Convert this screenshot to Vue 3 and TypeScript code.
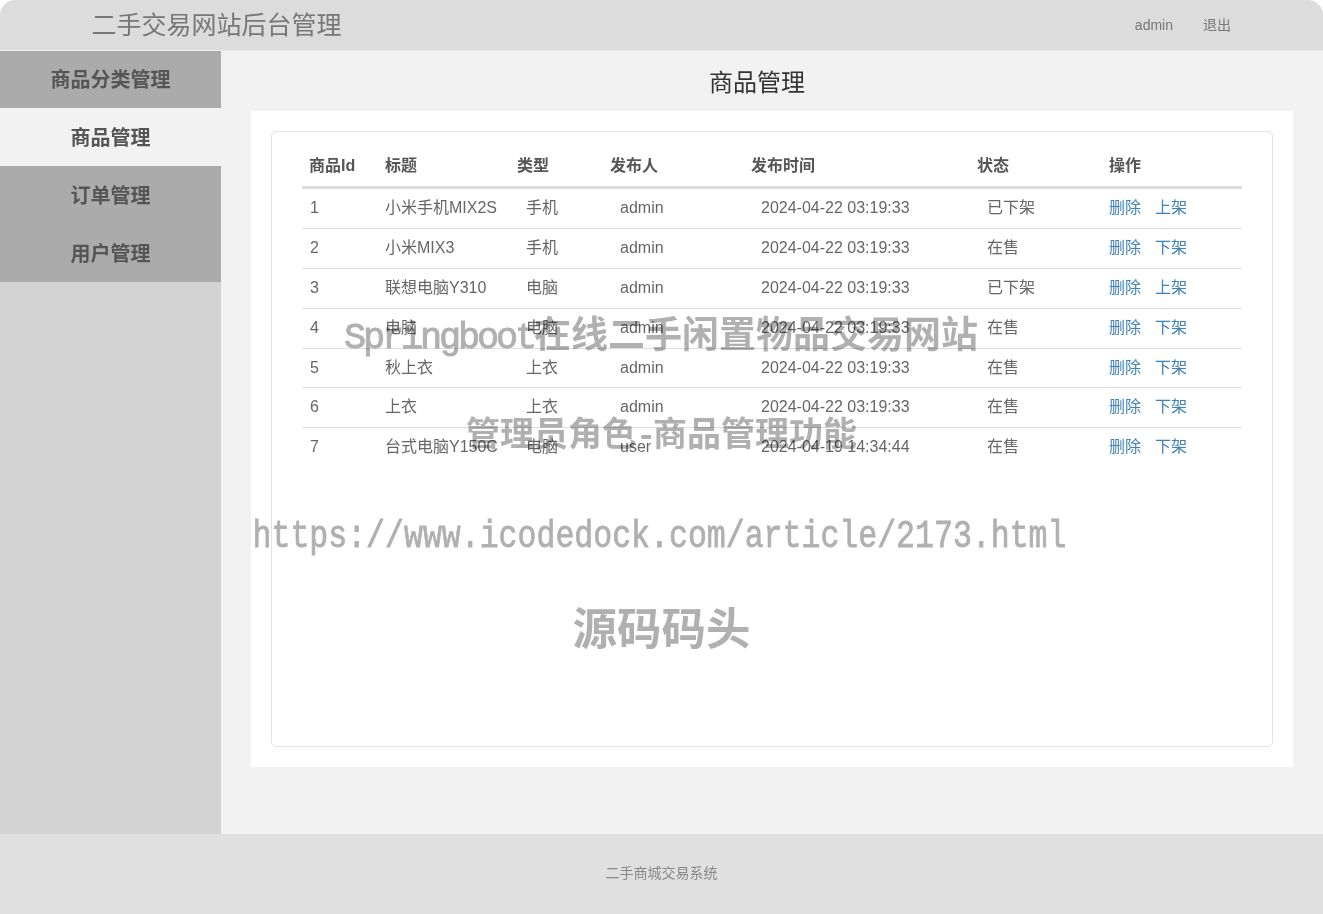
<script setup lang="ts">
interface Goods {
  id: number
  title: string
  type: string
  publisher: string
  time: string
  status: string
  action: string
}

const menus = ['商品分类管理', '商品管理', '订单管理', '用户管理']
const activeMenu = '商品管理'

const goods: Goods[] = [
  { id: 1, title: '小米手机MIX2S', type: '手机', publisher: 'admin', time: '2024-04-22 03:19:33', status: '已下架', action: '上架' },
  { id: 2, title: '小米MIX3', type: '手机', publisher: 'admin', time: '2024-04-22 03:19:33', status: '在售', action: '下架' },
  { id: 3, title: '联想电脑Y310', type: '电脑', publisher: 'admin', time: '2024-04-22 03:19:33', status: '已下架', action: '上架' },
  { id: 4, title: '电脑', type: '电脑', publisher: 'admin', time: '2024-04-22 03:19:33', status: '在售', action: '下架' },
  { id: 5, title: '秋上衣', type: '上衣', publisher: 'admin', time: '2024-04-22 03:19:33', status: '在售', action: '下架' },
  { id: 6, title: '上衣', type: '上衣', publisher: 'admin', time: '2024-04-22 03:19:33', status: '在售', action: '下架' },
  { id: 7, title: '台式电脑Y150C', type: '电脑', publisher: 'user', time: '2024-04-19 14:34:44', status: '在售', action: '下架' },
]
</script>

<template>
  <div class="page">
    <header class="top">
      <h1 class="brand">二手交易网站后台管理</h1>
      <div class="user">
        <span>admin</span>
        <span>退出</span>
      </div>
    </header>

    <div class="middle">
      <aside class="side">
        <a
          v-for="m in menus"
          :key="m"
          class="menu-item"
          :class="{ active: m === activeMenu }"
        >{{ m }}</a>
      </aside>

      <main class="content">
        <h2 class="page-title">商品管理</h2>
        <section class="panel">
          <div class="card">
            <table class="goods">
              <colgroup>
                <col class="c1" />
                <col class="c2" />
                <col class="c3" />
                <col class="c4" />
                <col class="c5" />
                <col class="c6" />
                <col class="c7" />
              </colgroup>
              <thead>
                <tr>
                  <th>商品Id</th>
                  <th>标题</th>
                  <th>类型</th>
                  <th>发布人</th>
                  <th>发布时间</th>
                  <th>状态</th>
                  <th>操作</th>
                </tr>
              </thead>
              <tbody>
                <tr v-for="g in goods" :key="g.id">
                  <td class="id">{{ g.id }}</td>
                  <td>{{ g.title }}</td>
                  <td class="type">{{ g.type }}</td>
                  <td class="indent">{{ g.publisher }}</td>
                  <td class="indent">{{ g.time }}</td>
                  <td class="indent">{{ g.status }}</td>
                  <td>
                    <a class="link">删除</a>
                    <a class="link">{{ g.action }}</a>
                  </td>
                </tr>
              </tbody>
            </table>
          </div>
        </section>
      </main>
    </div>

    <footer class="bottom">二手商城交易系统</footer>

    <!-- watermark sits over the whole page -->
    <div class="watermark">
      <p class="wm wm1"><span class="latin">Springboot</span>在线二手闲置物品交易网站</p>
      <p class="wm wm2">管理员角色<span class="dash">-</span>商品管理功能</p>
      <p class="wm wm3">https://www.icodedock.com/article/2173.html</p>
      <p class="wm wm4">源码码头</p>
    </div>
  </div>
</template>

<style>
html,
body {
  margin: 0;
  background: #fff;
}
</style>

<style scoped>
.page {
  position: relative;
  display: flex;
  flex-direction: column;
  height: 914px;
  overflow: hidden;
  font-family: "Liberation Sans", "Noto Sans CJK SC", sans-serif;
  font-size: 16px;
  line-height: 1.42857;
  color: #666;
}

.top {
  display: flex;
  align-items: center;
  justify-content: space-between;
  flex: none;
  height: 48px;
  padding: 2px 92px 0 91.5px;
  background: #dcdcdc;
  border-bottom: 1px solid #eee;
  border-radius: 15px 15px 0 0;
}

.brand {
  margin: 0;
  font-size: 25px;
  font-weight: 400;
  color: #777;
}

.user {
  display: flex;
  gap: 30px;
  font-size: 14px;
  color: #777;
}

.middle {
  display: flex;
  flex: 1;
  min-height: 0;
}

.side {
  flex: none;
  width: 221px;
  background: #d3d3d3;
}

.menu-item {
  display: block;
  height: 58px;
  line-height: 60px;
  text-align: center;
  font-size: 20px;
  font-weight: 700;
  color: #555;
  background: #ababab;
}

.menu-item:first-child {
  height: 57px;
  line-height: 58px;
}

.menu-item.active {
  background: #f2f2f2;
}

.content {
  flex: 1;
  padding-right: 30px;
  background: #f2f2f2;
}

.page-title {
  margin: 0;
  height: 60px;
  line-height: 64px;
  text-align: center;
  font-size: 24px;
  font-weight: 400;
  color: #333;
}

.panel {
  height: 656px;
  margin-left: 30px;
  padding: 20px;
  box-sizing: border-box;
  background: #fff;
}

.card {
  height: 100%;
  box-sizing: border-box;
  padding: 15.3px 30px 0;
  background: #fff;
  border: 1px solid #e3e3e3;
  border-radius: 5px;
}

.goods {
  width: 940px;
  table-layout: fixed;
  border-collapse: collapse;
  border-spacing: 0;
}

.c1 { width: 76px; }
.c2 { width: 132px; }
.c3 { width: 93px; }
.c4 { width: 141px; }
.c5 { width: 226px; }
.c6 { width: 132px; }
.c7 { width: 140px; }

.goods th {
  padding: 8px 7px;
  text-align: left;
  font-weight: 700;
  color: #555;
  border-bottom: 3px solid #ddd;
}

.goods td {
  padding: 8px 7px;
  white-space: nowrap;
  border-top: 1px solid #ddd;
}

.goods tbody tr:first-child td {
  border-top: 0;
}

.goods td.id {
  padding-left: 8px;
}

.goods td.type {
  padding-left: 16px;
}

.goods td.indent {
  padding-left: 17px;
}

.link {
  margin-right: 14px;
  color: #3f82bb;
}

.bottom {
  flex: none;
  height: 80px;
  line-height: 78px;
  text-align: center;
  font-size: 14px;
  color: #888;
  background: #e0e0e0;
}

.watermark {
  position: absolute;
  inset: 0;
  pointer-events: none;
  mix-blend-mode: multiply;
}

.wm {
  position: absolute;
  left: 0;
  right: 0;
  margin: 0;
  text-align: center;
  white-space: nowrap;
  font-family: "Liberation Mono", "Noto Sans CJK SC", monospace;
  font-weight: 700;
  line-height: 1;
  color: #b0b0b0;
}

.wm1 {
  top: 320px;
  left: -1px;
  font-size: 37px;
}

.wm1 .latin {
  font-weight: 400;
  letter-spacing: -3.2px;
  -webkit-text-stroke: 0.9px #b0b0b0;
}

.wm2 {
  top: 420px;
  font-size: 34px;
}

.wm2 .dash {
  letter-spacing: -3.4px;
}

.wm3 {
  top: 518px;
  left: -4px;
  font-size: 38.8px;
  font-weight: 400;
  -webkit-text-stroke: 0.8px #b0b0b0;
  transform: scaleX(0.813);
}

.wm4 {
  top: 611px;
  font-size: 44.5px;
}
</style>
